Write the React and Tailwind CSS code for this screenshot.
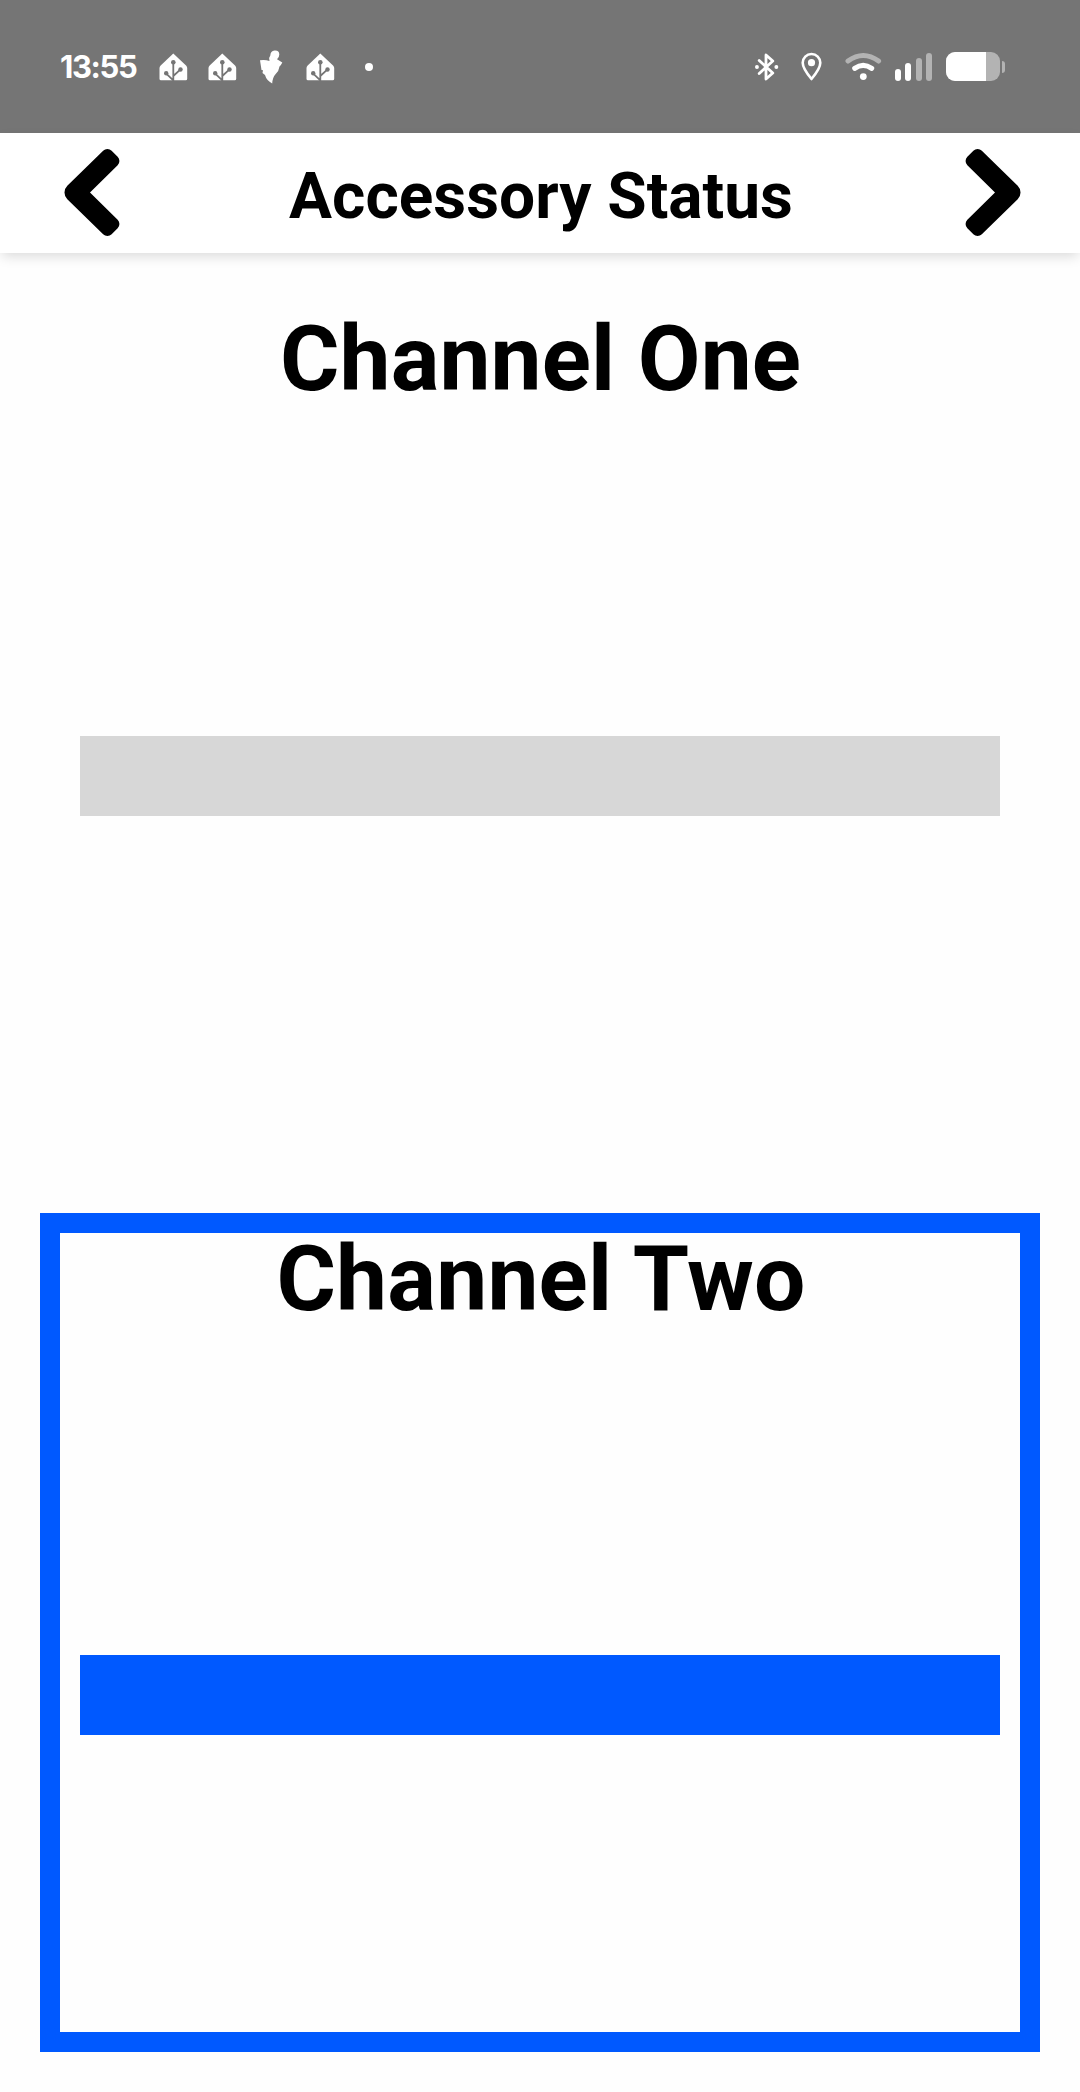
function House() {
  return (
    <svg className="h-7 w-[29px]" viewBox="0 0 29 28">
      <path d="M14.3 0.6 27 12.4Q28.2 13.6 28.2 15V25.8Q28.2 27.3 26.7 27.3H2Q.5 27.3 .5 25.8V15Q.5 13.6 1.7 12.4Z" fill="#fff" />
      <g stroke="#757575" strokeWidth="1.8" fill="none">
        <path d="M14.3 9V28M7 20.3 14.3 27.3M21.5 16.3 14.3 23" />
      </g>
      <g fill="#757575">
        <circle cx="14.3" cy="9.3" r="2.3" />
        <circle cx="7.2" cy="20.3" r="2.2" />
        <circle cx="21.5" cy="16.5" r="2.2" />
      </g>
    </svg>
  );
}

function Chevron({ className }) {
  return (
    <svg className={className} viewBox="62 147 60 92">
      <path d="M67.3 185.7 103.15 150.65A6 6 0 0 1 111.65 150.65L117.65 156.65A6 6 0 0 1 117.65 165.15L90 192.5 117.65 219.85A6 6 0 0 1 117.65 228.35L111.65 234.35A6 6 0 0 1 103.15 234.35L67.3 199.3A9.6 9.6 0 0 1 67.3 185.7Z" />
    </svg>
  );
}

function StatusBar() {
  return (
    <div className="flex h-[133px] items-center bg-[#757575] pr-[75px] pl-[60px]">
      <span className="w-[99px] font-['Inter',sans-serif] text-[31px] leading-none font-bold tracking-[-1.4px] whitespace-nowrap text-white">13:55</span>
      <House />
      <span className="w-5" />
      <House />
      <svg className="ml-[22px] h-[34px] w-6" viewBox="0 0 24 34" fill="#fff">
        <path d="M1 10.2Q6 9.3 10.5 11 9.2 8 11.3 5.5 11.5 1 15.5 .6 20.3 .2 20.3 4.5 20.3 7.5 18 9.3L23.3 12.5Q22.5 14.5 20.5 16.5 20 21 16.5 24.2 13.5 27.5 13.2 33.5 7.5 30.5 6 25L3.5 23 4 20.3 2.5 20Z" />
      </svg>
      <span className="w-[23px]" />
      <House />
      <span className="ml-[30px] size-2 rounded-full bg-white" />
      <div className="ml-auto flex h-[30px] items-center">
        <svg className="h-[30px] w-6" viewBox="0.5 0 24 30" fill="none" stroke="#fff" strokeWidth="2.8" strokeLinejoin="round" strokeLinecap="round">
          <path d="M4.7 8.5 18.3 21 11.5 27V3L18.3 9 4.7 21.5" />
          <path d="M2.4 15H2.5M21.8 15H21.9" strokeWidth="3.8" />
        </svg>
        <svg className="ml-[22px] h-[30px] w-[22px]" viewBox="0 0 22 30">
          <path d="M10.5 27Q1.7 16.5 1.7 10.8A8.8 8.8 0 0 1 19.3 10.8Q19.3 16.5 10.5 27Z" fill="none" stroke="#fff" strokeWidth="2.6" strokeLinejoin="round" />
          <circle cx="10.5" cy="10.7" r="3.6" fill="#fff" />
        </svg>
        <svg className="ml-[22px] h-[30px] w-[38px]" viewBox="0.3 0.6 38 30" fill="none" strokeWidth="5" strokeLinecap="round">
          <path d="M3.3 9.7Q18.5 -1.6 33.9 9.7" stroke="#b3b3b3" />
          <path d="M10 17Q18.5 11 27 17" stroke="#fff" />
          <circle cx="18.6" cy="25.2" r="3.4" fill="#fff" />
        </svg>
        <div className="ml-3 flex h-7 items-end gap-[4.5px]">
          <i className="h-3 w-1.5 rounded-full bg-white" />
          <i className="h-[18px] w-1.5 rounded-full bg-white" />
          <i className="h-[23px] w-1.5 rounded-full bg-[#b3b3b3]" />
          <i className="h-7 w-1.5 rounded-full bg-[#b3b3b3]" />
        </div>
        <div className="ml-3.5 flex h-[29px] w-[54px] overflow-hidden rounded-[9px] bg-[#b3b3b3]">
          <i className="h-full w-10 bg-white" />
        </div>
        <i className="ml-0.5 h-3 w-[3px] rounded-r-full bg-[#b3b3b3]" />
      </div>
    </div>
  );
}

export default function App() {
  return (
    <div className="flex h-[2092px] w-[1080px] flex-col bg-[#fefefe] font-['Roboto',sans-serif] text-black">
      <StatusBar />
      <header className="z-10 flex h-[120px] items-center justify-between bg-white pr-[57px] pl-[62px] shadow-[0_5px_12px_-2px_rgba(0,0,0,0.15)]">
        <Chevron className="h-[92px] w-[60px]" />
        <h1 className="mr-[3px] pt-[8px] text-[64px] leading-none font-bold">Accessory Status</h1>
        <Chevron className="h-[92px] w-[60px] -scale-x-100" />
      </header>
      <main className="flex flex-col px-10 pt-[41px]">
        <section className="h-[919px] border-20 border-transparent px-5">
          <h2 className="h-[422px] pl-px text-center text-[91px] leading-[90px] font-bold tracking-[0.1px]">Channel One</h2>
          <div className="h-20 bg-[#d7d7d7]" />
        </section>
        <section className="h-[839px] border-20 border-[#0059ff] px-5">
          <h2 className="h-[422px] pl-[2px] text-center text-[91px] leading-[92px] font-bold tracking-[0.2px]">Channel Two</h2>
          <div className="h-20 bg-[#0059ff]" />
        </section>
      </main>
    </div>
  );
}
